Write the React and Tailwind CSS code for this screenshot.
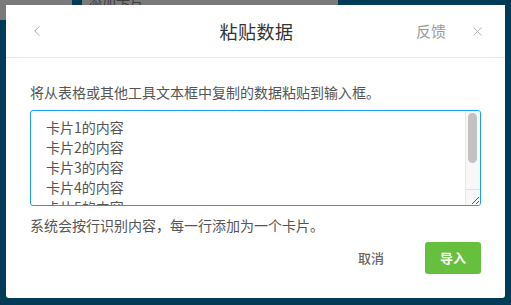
import { ChevronLeft, X } from "lucide-react";

const lines = ["卡片1的内容", "卡片2的内容", "卡片3的内容", "卡片4的内容", "卡片5的内容"];

export default function App() {
  return (
    <div
      className="relative w-[511px] h-[305px] overflow-hidden bg-[#013b58]"
      style={{ fontFamily: '"Noto Sans CJK SC", "Noto Sans", sans-serif' }}
    >
      {/* page behind the dialog */}
      <div className="flex items-start">
        <div className="w-[72px] h-[20px] bg-[#7a7a7a]" />
        <div className="w-[10px]" />
        <div className="w-[256px] h-[20px] bg-[#7a7a7a] overflow-hidden">
          <div className="pl-[6px] -mt-[10px] text-[14px] leading-[20px] text-[#3e3e3e]">添加卡片</div>
        </div>
      </div>

      {/* dialog */}
      <div className="absolute top-[5px] left-[6px] w-[499px] h-[293px] bg-white rounded-b-[3px] flex flex-col">
        <div className="h-[53px] border-b border-[#e6e6e6] flex items-center justify-between pl-[22px] pr-[20px]">
          <div className="w-[80px] flex items-center">
            <ChevronLeft size={18} strokeWidth={1.1} className="text-[#999]" />
          </div>
          <div className="text-[18px] text-[#333] tracking-[0.5px]">粘贴数据</div>
          <div className="w-[80px] flex items-center justify-end gap-[24px]">
            <span className="text-[15px] text-[#9a9a9a]">反馈</span>
            <X size={15} strokeWidth={1.1} className="text-[#999]" />
          </div>
        </div>

        <div className="flex-1 px-[24px] pt-[24px]">
          <p className="text-[14px] leading-[20px] text-[#555]">将从表格或其他工具文本框中复制的数据粘贴到输入框。</p>

          <div className="mt-[8px] h-[96px] border border-[#19a0ee] rounded-[3px] flex overflow-hidden">
            <div className="flex-1 pl-[15px] pt-[6px] text-[14px] leading-[20px] text-[#555]">
              {lines.map(l => (
                <div key={l}>{l}</div>
              ))}
            </div>
            <div className="w-[15px] bg-[#f7f7f7] border-l border-[#e8e8e8] flex flex-col">
              <div className="mt-[2px] ml-[2px] w-[9px] h-[50px] rounded-full bg-[#c2c2c2]" />
              <div className="flex-1" />
              <div className="h-[16px] border-t border-[#e0e0e0] flex items-end justify-end">
                <svg width="10" height="10" viewBox="0 0 10 10">
                  <path d="M9 2 L2 9 M9 6 L6 9" stroke="#555" strokeWidth="1" />
                </svg>
              </div>
            </div>
          </div>

          <p className="mt-[9px] text-[14px] leading-[20px] text-[#555]">系统会按行识别内容，每一行添加为一个卡片。</p>

          <div className="mt-[7px] flex justify-end gap-[26px]">
            <button className="w-[56px] h-[32px] text-[13px] font-medium text-[#666]">取消</button>
            <button className="w-[56px] h-[32px] rounded-[3px] bg-[#66c03d] text-[13px] font-bold text-white">导入</button>
          </div>
        </div>
      </div>
    </div>
  );
}
